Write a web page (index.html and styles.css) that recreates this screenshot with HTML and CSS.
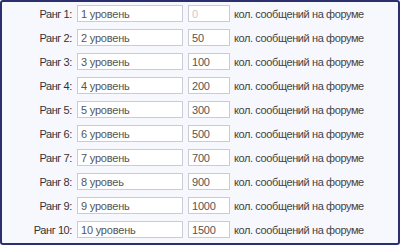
FILE: index.html
```html
<!DOCTYPE html>
<html>
<head>
    <title>Ранги</title>
    <link rel="stylesheet" href="styles.css">
</head>
<body>
    <div class="ranks">
        <div class="rank-row">
            <label class="rank-label">Ранг 1:</label>
            <input type="text" class="rank-name" value="1 уровень">
            <input type="text" class="rank-posts" value="0" disabled>
            <span class="rank-hint">кол. сообщений на форуме</span>
        </div>
        <div class="rank-row">
            <label class="rank-label">Ранг 2:</label>
            <input type="text" class="rank-name" value="2 уровень">
            <input type="text" class="rank-posts" value="50">
            <span class="rank-hint">кол. сообщений на форуме</span>
        </div>
        <div class="rank-row">
            <label class="rank-label">Ранг 3:</label>
            <input type="text" class="rank-name" value="3 уровень">
            <input type="text" class="rank-posts" value="100">
            <span class="rank-hint">кол. сообщений на форуме</span>
        </div>
        <div class="rank-row">
            <label class="rank-label">Ранг 4:</label>
            <input type="text" class="rank-name" value="4 уровень">
            <input type="text" class="rank-posts" value="200">
            <span class="rank-hint">кол. сообщений на форуме</span>
        </div>
        <div class="rank-row">
            <label class="rank-label">Ранг 5:</label>
            <input type="text" class="rank-name" value="5 уровень">
            <input type="text" class="rank-posts" value="300">
            <span class="rank-hint">кол. сообщений на форуме</span>
        </div>
        <div class="rank-row">
            <label class="rank-label">Ранг 6:</label>
            <input type="text" class="rank-name" value="6 уровень">
            <input type="text" class="rank-posts" value="500">
            <span class="rank-hint">кол. сообщений на форуме</span>
        </div>
        <div class="rank-row">
            <label class="rank-label">Ранг 7:</label>
            <input type="text" class="rank-name" value="7 уровень">
            <input type="text" class="rank-posts" value="700">
            <span class="rank-hint">кол. сообщений на форуме</span>
        </div>
        <div class="rank-row">
            <label class="rank-label">Ранг 8:</label>
            <input type="text" class="rank-name" value="8 уровеь">
            <input type="text" class="rank-posts" value="900">
            <span class="rank-hint">кол. сообщений на форуме</span>
        </div>
        <div class="rank-row">
            <label class="rank-label">Ранг 9:</label>
            <input type="text" class="rank-name" value="9 уровень">
            <input type="text" class="rank-posts" value="1000">
            <span class="rank-hint">кол. сообщений на форуме</span>
        </div>
        <div class="rank-row">
            <label class="rank-label">Ранг 10:</label>
            <input type="text" class="rank-name" value="10 уровень">
            <input type="text" class="rank-posts" value="1500">
            <span class="rank-hint">кол. сообщений на форуме</span>
        </div>
    </div>
</body>
</html>
```

FILE: styles.css
```css
html, body {
    margin: 0;
    height: 100%;
}
body {
    font-family: "Liberation Sans", Arial, sans-serif;
    font-size: 11px;
    letter-spacing: -0.4px;
    color: #333;
    background-color: #fff;
}
.ranks {
    box-sizing: border-box;
    height: 245px;
    padding: 3px 0 0 0;
    display: flex;
    flex-direction: column;
    gap: 7px;
    background-color: #f7f8fd;
    border: 2px solid #2b2f6e;
    border-radius: 3px;
}
.rank-row {
    display: flex;
    align-items: center;
    height: 17px;
}
.rank-label {
    width: 70px;
    text-align: right;
    margin-right: 5px;
}
input {
    box-sizing: border-box;
    height: 17px;
    padding: 0 3px;
    font-family: "Liberation Sans", Arial, sans-serif;
    font-size: 11px;
    letter-spacing: -0.2px;
    color: #555;
    background-color: #fff;
    border: 1px solid #c9ccd4;
    border-radius: 0;
}
.rank-name {
    width: 106px;
    margin-right: 5px;
}
.rank-posts {
    width: 42px;
    margin-right: 4px;
}
.rank-posts:disabled {
    color: #ccc;
}
.rank-hint {
    color: #444;
}
```
